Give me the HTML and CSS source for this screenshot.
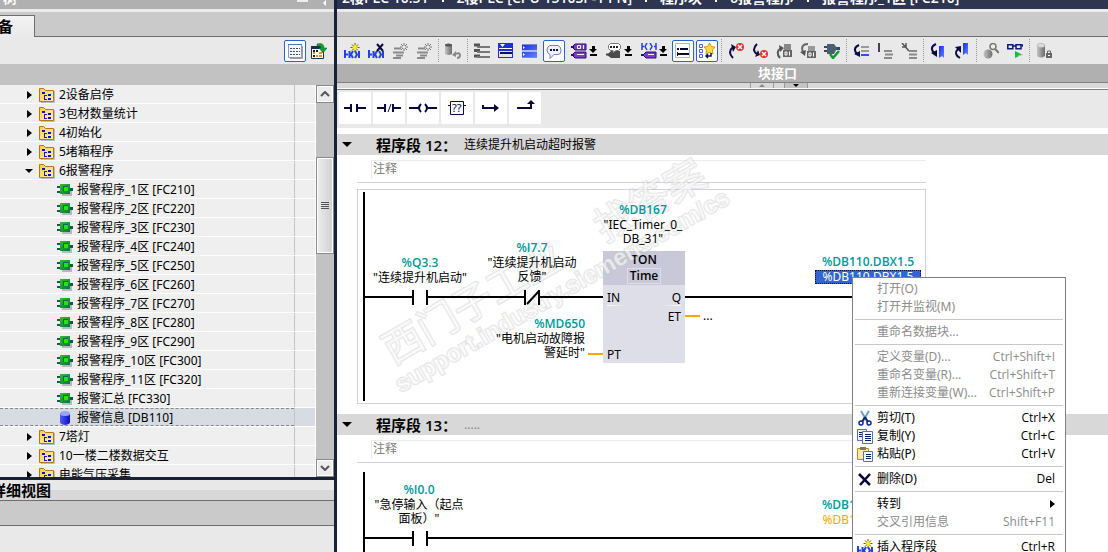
FILE: index.html
```html
<!DOCTYPE html>
<html lang="zh-CN">
<head>
  <meta charset="UTF-8">
  <meta name="viewport" content="width=device-width, initial-scale=1.0">
  <title>报警程序_1区 [FC210]</title>
  <link rel="stylesheet" href="styles.css">
</head>
<body>

  <!-- icon set -->
  <svg class="defs" width="0" height="0">
    <defs>
      <linearGradient id="gold" x1="0" y1="0" x2="1" y2="1"><stop offset="0" stop-color="#ffc94a"/><stop offset="1" stop-color="#fff3c4"/></linearGradient>
      <linearGradient id="green" x1="0" y1="0" x2="1" y2="1"><stop offset="0" stop-color="#2cc42c"/><stop offset="1" stop-color="#0d7040"/></linearGradient>
      <linearGradient id="blue" x1="0" y1="0" x2="1" y2="0"><stop offset="0" stop-color="#4f5cff"/><stop offset="1" stop-color="#0a12b8"/></linearGradient>
      <linearGradient id="panel" x1="0" y1="0" x2="1" y2="1"><stop offset="0" stop-color="#1c2ce8"/><stop offset="1" stop-color="#5a86ff"/></linearGradient>
      <linearGradient id="grey" x1="0" y1="0" x2="1" y2="0"><stop offset="0" stop-color="#c4c4c4"/><stop offset="1" stop-color="#6c6c6c"/></linearGradient>
    </defs>
    <symbol id="i-folder" viewBox="0 0 16 16">
      <path d="M2 15.500h13.500V4" fill="none" stroke="#b9bcc6"/>
      <path d="M.5 14.500V1.500h4l2 2h8v11z" fill="url(#gold)" stroke="#b07a10"/>
      <path d="M3 5h3v2H3zM9 7h3v2H9zM9 11h3v2H9z" fill="#0a0af0"/>
      <path d="M5.500 8v4.500M5 8.500h3M5 12.500h3" stroke="#0a0af0" fill="none"/>
    </symbol>
    <symbol id="i-fc" viewBox="0 0 16 16">
      <path d="M5 13h9M14 9v5" stroke="#b4b8c0" stroke-width="2"/>
      <path d="M0 4h4v2H0zM0 9h4v2H0zM12 6h4v3h-4z" fill="#0c5c4c"/>
      <path d="M3 2h10v10H3z" fill="url(#green)"/>
      <path d="M6 4h5v5H6z" fill="#0b6b3c"/><path d="M7 5h4v4H7z" fill="#24e01e"/>
    </symbol>
    <symbol id="i-db" viewBox="0 0 16 16">
      <path d="M3 3v10q5 4 10 0V3z" fill="url(#blue)"/>
      <ellipse cx="8" cy="3.500" rx="5" ry="2.500" fill="#9aa4ff"/>
    </symbol>
    <symbol id="i-list" viewBox="0 0 16 16">
      <path d="M3 15.500h12.500V3" fill="none" stroke="#9c9ca4"/>
      <path d="M1.500 1.500h13v13h-13z" fill="#f6f8ff" stroke="#8694d8"/>
      <path d="M1 1.500h14" stroke="#5a68b8"/>
      <path d="M3 5.500h10M3 8.500h10M3 11.500h10" stroke="#444a60" stroke-dasharray="2 1"/>
    </symbol>
    <symbol id="i-export" viewBox="0 0 16 16">
      <path d="M.5 4.500h12v11H.5z" fill="#fff" stroke="#1c2b52"/>
      <path d="M0 3h12v3H0z" fill="#1c2b52"/>
      <path d="M2 7h2v2H2zM5 7h2v2H5zM2 12h2v2H2z" fill="#1c1c1c"/>
      <path d="M8 9h3v2H8zM5 12h2v2H5zM8 12h3v2H8zM2 9h2v2H2z" fill="#ef8a1c"/>
      <path d="M6 1q7-2 7 4h3l-4 5-4-5h2q0-3-4-2z" fill="#1c9b2c" stroke="#0b6a1c" stroke-width=".5"/>
    </symbol>
    <symbol id="i-netnew" viewBox="0 0 16 16">
      <path d="M1 7v8M1 11.500h3M5.500 8v7M9 8l-2 3.500 2 3.500M11 8l2 3.500L11 15M15 8v7" fill="none" stroke="#2440e8" stroke-width="2"/>
      <path d="M11 0v9M6.500 4.500h9M8 1.500l6 6M14 1.500l-6 6" stroke="#586008"/>
      <path d="M11 2v5M8.500 4.500h5" stroke="#fff000" stroke-width="2"/>
    </symbol>
    <symbol id="i-netdel" viewBox="0 0 16 16">
      <path d="M1 7v8M1 11.500h3M5.500 8v7M9 8l-2 3.500 2 3.500M11 8l2 3.500L11 15M15 8v7" fill="none" stroke="#2440e8" stroke-width="2"/>
      <path d="M9 1l6 7M15 1L9 8" stroke="#0b0b44" stroke-width="2"/>
    </symbol>
    <symbol id="i-linesnew" viewBox="0 0 16 16">
      <path d="M2 5.500h7M1 9.500h11M4 12.500h7M1 15h8" stroke="#8a8a8a" stroke-width="2"/>
      <path d="M12 0v8M8 4h8M9 1l6 6M15 1L9 7" stroke="#777"/>
      <circle cx="12" cy="4" r="1.500" fill="#eee"/>
    </symbol>
    <symbol id="i-dbundo" viewBox="0 0 16 16">
      <path d="M0 2v9q4 2 7 0V2z" fill="url(#grey)"/><ellipse cx="3.500" cy="2" rx="3.500" ry="1.500" fill="#555"/>
      <path d="M10 11q5-2 5 1 0 3-3 3" fill="none" stroke="#888" stroke-width="2"/><path d="M7 12l4-4v6z" fill="#888"/>
    </symbol>
    <symbol id="i-rows" viewBox="0 0 16 16">
      <path d="M0 2h6M0 7.500h6M0 13h6" stroke="#555" stroke-width="3" fill="none"/>
      <path d="M3 4h13M3 9h13M3 14h13" stroke="#777" stroke-width="2"/>
    </symbol>
    <symbol id="i-window" viewBox="0 0 16 16">
      <path d="M0 0h15v15H0z" fill="#1c2fd8"/><path d="M1 8h13v6H1z" fill="#dfe6ff"/>
      <path d="M2 1h5L4.500 4zM1 5h13v1H1z" fill="#fff"/><path d="M2 10h12" stroke="#0b1050" stroke-width="2"/>
    </symbol>
    <symbol id="i-window2" viewBox="0 0 16 16">
      <path d="M0 2h15v5H0zM0 9h15v5H0z" fill="url(#panel)"/>
      <path d="M0 1.500h15M0 8h15M0 14.500h15" stroke="#7a8ad0"/><path d="M1 3l2 1.500L1 6zM1 10l2 1.500L1 13z" fill="#fff"/>
    </symbol>
    <symbol id="i-bubble" viewBox="0 0 16 16">
      <path d="M4 2.500h8q3 1 3 5 0 4-3 4H8l-4 4v-4q-3-1-3-4.500 0-3.500 3-4.500z" fill="#eef1ff" stroke="#6b7fd4"/>
      <path d="M4 6h2v2H4zM7 6h2v2H7zM10 6h2v2h-2z" fill="#0b1050"/>
    </symbol>
    <symbol id="i-tags" viewBox="0 0 16 16">
      <path d="M1 4l3-3h11v6H4zM1 12l3-3h11v6H4z" fill="#7a3cd0" stroke="#2c0c66"/>
      <path d="M0 4h3M0 12h3" stroke="#2c0c66" stroke-width="2"/>
      <path d="M6.500 2.500h3v3h-3z" fill="none" stroke="#fff"/><path d="M12.500 2v4M6 11.500h7" stroke="#fff"/>
    </symbol>
    <symbol id="i-tagtalk" viewBox="0 0 16 16">
      <path d="M1 12l4-4h9v7H5z" fill="#4a4a4a"/><path d="M0 11.500h4" stroke="#4a4a4a" stroke-width="2"/>
      <path d="M4.500.5h8l2 2v3l-2 2H10l-3 2v-2H4.500l-2-2v-3z" fill="#fff" stroke="#777"/><path d="M4 3h2v2H4zM7 3h2v2H7zM10 3h2v2h-2z" fill="#222"/>
    </symbol>
    <symbol id="i-nettag" viewBox="0 0 16 16">
      <path d="M1 0v7M1 3.500h2M6 0L4 3.500 6 7M9 0l2 3.500L9 7M15 0v7M13 3.500h2" fill="none" stroke="#2440e8" stroke-width="1.500"/>
      <path d="M2 12l3-3h10v6H5z" fill="#7a3cd0" stroke="#2c0c66"/><path d="M0 12h3" stroke="#2c0c66" stroke-width="2"/><path d="M7 11.500h6" stroke="#fff"/>
    </symbol>
    <symbol id="i-form" viewBox="0 0 16 16">
      <path d="M.5.5h14v14H.5z" fill="#fff" stroke="#aab6ee"/>
      <path d="M2 6h2M5 6h8M3 11h11" stroke="#080830" stroke-width="2"/><path d="M2.500 9v4" stroke="#080830"/>
    </symbol>
    <symbol id="i-fav" viewBox="0 0 16 16">
      <path d="M.5 1.500h3v3h-3zM.5 6.500h3v3h-3zM.5 11.500h3v3h-3z" fill="#fff" stroke="#4a60d8"/>
      <path d="M10.500 0l2 3.500 3.500.5-2.500 3 .5 4-3.500-1.500L7 11l.5-4L5 4l3.500-.5z" fill="#ffd83c" stroke="#a87800" stroke-width=".7"/>
      <path d="M12 10v3H7M9 11l-2 2 2 2" fill="none" stroke="#0b1050" stroke-width="1.500"/>
    </symbol>
    <symbol id="i-upx" viewBox="0 0 16 16">
      <path d="M5 15Q-1 9 5 4" fill="none" stroke="#0b0b44" stroke-width="2"/><path d="M3 1l5 3-3 5z" fill="#0b0b44"/>
      <circle cx="12" cy="4" r="4" fill="#e03030"/><path d="M10 2l4 4M14 2l-4 4" stroke="#fff" stroke-width="1.500"/>
    </symbol>
    <symbol id="i-downx" viewBox="0 0 16 16">
      <path d="M5 1Q-1 7 5 11" fill="none" stroke="#0b0b44" stroke-width="2"/><path d="M3 14l5-2-2-5z" fill="#0b0b44"/>
      <circle cx="12" cy="11" r="4" fill="#e03030"/><path d="M10 9l4 4M14 9l-4 4" stroke="#fff" stroke-width="1.500"/>
    </symbol>
    <symbol id="i-upblk" viewBox="0 0 16 16">
      <path d="M4 15Q-1 9 5 5" fill="none" stroke="#555" stroke-width="2"/><path d="M3 2l5 3-4 4z" fill="#555"/>
      <path d="M8 1h7v12H8z" fill="#888"/><path d="M7 7h9v7H7z" fill="#666"/><path d="M9 9h2v3H9zM13.500 8.500v4" fill="none" stroke="#fff"/>
    </symbol>
    <symbol id="i-downblk" viewBox="0 0 16 16">
      <path d="M8 1Q0 1 3 9" fill="none" stroke="#666" stroke-width="2"/><path d="M0 9l5 4 1-6z" fill="#555"/>
      <path d="M8 3h7v10H8z" fill="#999"/><path d="M7 8h9v7H7z" fill="#666"/><path d="M9 10h2v3H9zM13.500 9.500v4" fill="none" stroke="#fff"/>
    </symbol>
    <symbol id="i-check" viewBox="0 0 16 16">
      <path d="M0 3h4v2H0zM0 7h4v2H0zM12 4h4v3h-4z" fill="#34485c"/><path d="M3 1h7l3 4-3 6H3z" fill="#4a5e74"/>
      <path d="M6 11l3 4 6-7" fill="none" stroke="#0f9b2c" stroke-width="2.500"/>
    </symbol>
    <symbol id="i-goto" viewBox="0 0 16 16">
      <path d="M6 2Q-1 5 4 11" fill="none" stroke="#0b0b44" stroke-width="2"/><path d="M1 11l6 3 0-6z" fill="#0b0b44"/>
      <path d="M8 4h8M8 8h8" stroke="#999" stroke-width="2"/><path d="M8 12h8" stroke="#3050f0" stroke-width="2"/>
    </symbol>
    <symbol id="i-ins" viewBox="0 0 16 16">
      <path d="M2 0v9" stroke="#444" stroke-width="2"/><path d="M7 8h8M8 11.500h8M7 15h8" stroke="#8a8a8a" stroke-width="2"/>
    </symbol>
    <symbol id="i-insx" viewBox="0 0 16 16">
      <path d="M1 0l7 8M5 0v5M1 4h3" stroke="#555" stroke-width="1.500"/><path d="M8 8h8M8 11.500h8M8 15h8" stroke="#8a8a8a" stroke-width="2"/>
    </symbol>
    <symbol id="i-markdown" viewBox="0 0 16 16">
      <path d="M6 1Q-1 4 4 10" fill="none" stroke="#0b0b44" stroke-width="2"/><path d="M1 10l6 4 0-7z" fill="#0b0b44"/>
      <path d="M9 3h5v12l-2-2-3 2z" fill="url(#panel)"/>
    </symbol>
    <symbol id="i-markup" viewBox="0 0 16 16">
      <path d="M6 15Q-1 11 4 6" fill="none" stroke="#0b0b44" stroke-width="2"/><path d="M1 4l6-1v7z" fill="#0b0b44"/>
      <path d="M9 0h5v12l-2-2-3 2z" fill="url(#panel)"/>
    </symbol>
    <symbol id="i-search" viewBox="0 0 16 16">
      <circle cx="5" cy="11" r="4.500" fill="url(#grey)"/><circle cx="10" cy="3.500" r="3" fill="#eee" stroke="#777" stroke-width="1.500"/><path d="M12 6l4 4" stroke="#777" stroke-width="2"/>
    </symbol>
    <symbol id="i-monitor" viewBox="0 0 16 16">
      <path d="M.8 1.800h5v4h-5zM9 1.800h5v4H9zM6 3h3M14 2l2 0v2" fill="#dfe8ff" stroke="#0b1c6c" stroke-width="1.500"/>
      <path d="M8 8l7 3.500L8 15z" fill="#10c040"/><path d="M11 13l5-1.500" stroke="#bbb"/>
    </symbol>
    <symbol id="i-lock" viewBox="0 0 16 16">
      <path d="M1 2v11q4 3 8 0V2z" fill="url(#grey)"/><ellipse cx="5" cy="2.500" rx="4" ry="2" fill="#ddd" stroke="#999" stroke-width=".5"/>
      <path d="M10 10h6v5h-6z" fill="#666"/><path d="M11.500 10V8h3v2" fill="none" stroke="#666"/><path d="M12 12h2v1h-2z" fill="#fff"/>
    </symbol>
    <symbol id="i-cut" viewBox="0 0 16 16">
      <path d="M4 1l6 10M12 1L6 11" stroke="#6f9cc4" stroke-width="2"/><path d="M8 7l3 5M8 7l-3 5" stroke="#0b2c6c" stroke-width="2"/>
      <circle cx="4" cy="13" r="2" fill="none" stroke="#0b2c8c" stroke-width="1.500"/><circle cx="12" cy="13" r="2" fill="none" stroke="#0b2c8c" stroke-width="1.500"/>
    </symbol>
    <symbol id="i-copy" viewBox="0 0 16 16">
      <path d="M.5 1.500h9v11h-9z" fill="#eef2ff" stroke="#5a6cc0"/><path d="M2 4.500h4M2 6.500h4M2 8.500h4" stroke="#0b1c6c"/>
      <path d="M5.500 3.500h10v12h-10z" fill="#f6f8ff" stroke="#5a6cc0"/><path d="M8 6.500h6M8 8.500h6M8 10.500h6M8 12.500h6" stroke="#0b1c6c"/>
    </symbol>
    <symbol id="i-paste" viewBox="0 0 16 16">
      <path d="M.5 2.500h11v11H.5z" fill="#ffeaa0" stroke="#b88a20"/><path d="M3 1h6v3H3z" fill="#777"/>
      <path d="M6.500 5.500h9v10h-9z" fill="#f6f8ff" stroke="#5a6cc0"/><path d="M9 8.500h5M9 10.500h5M9 12.500h5" stroke="#0b1c6c"/>
    </symbol>
    <symbol id="i-del" viewBox="0 0 16 16">
      <path d="M2 3l11 11M13 3L3 14" stroke="#08083c" stroke-width="2.500"/>
    </symbol>
  </svg>

  <aside class="project">
    <div class="titlebar titlebar-grey">
      <span class="titlebar-text">树</span>
      <span class="titlebar-tools"><i class="dock"></i><i class="collapse"></i></span>
    </div>
    <div class="tabs"><button class="tab">设备</button></div>
    <div class="tools tools-right">
      <button class="tool active" aria-label="详细信息"><svg class="icon"><use href="#i-list"/></svg></button>
      <button class="tool" aria-label="导出"><svg class="icon"><use href="#i-export"/></svg></button>
    </div>
    <div class="tree-head"></div>

    <div class="tree-area">
      <ul class="tree">
        <li class="row"><span class="name"><i class="arrow"></i><svg class="icon"><use href="#i-folder"/></svg>2设备启停</span></li>
        <li class="row"><span class="name"><i class="arrow"></i><svg class="icon"><use href="#i-folder"/></svg>3包材数量统计</span></li>
        <li class="row"><span class="name"><i class="arrow"></i><svg class="icon"><use href="#i-folder"/></svg>4初始化</span></li>
        <li class="row"><span class="name"><i class="arrow"></i><svg class="icon"><use href="#i-folder"/></svg>5堵箱程序</span></li>
        <li class="row"><span class="name"><i class="arrow open"></i><svg class="icon"><use href="#i-folder"/></svg>6报警程序</span></li>
        <li class="row"><span class="name child"><svg class="icon"><use href="#i-fc"/></svg>报警程序_1区 [FC210]</span></li>
        <li class="row"><span class="name child"><svg class="icon"><use href="#i-fc"/></svg>报警程序_2区 [FC220]</span></li>
        <li class="row"><span class="name child"><svg class="icon"><use href="#i-fc"/></svg>报警程序_3区 [FC230]</span></li>
        <li class="row"><span class="name child"><svg class="icon"><use href="#i-fc"/></svg>报警程序_4区 [FC240]</span></li>
        <li class="row"><span class="name child"><svg class="icon"><use href="#i-fc"/></svg>报警程序_5区 [FC250]</span></li>
        <li class="row"><span class="name child"><svg class="icon"><use href="#i-fc"/></svg>报警程序_6区 [FC260]</span></li>
        <li class="row"><span class="name child"><svg class="icon"><use href="#i-fc"/></svg>报警程序_7区 [FC270]</span></li>
        <li class="row"><span class="name child"><svg class="icon"><use href="#i-fc"/></svg>报警程序_8区 [FC280]</span></li>
        <li class="row"><span class="name child"><svg class="icon"><use href="#i-fc"/></svg>报警程序_9区 [FC290]</span></li>
        <li class="row"><span class="name child"><svg class="icon"><use href="#i-fc"/></svg>报警程序_10区 [FC300]</span></li>
        <li class="row"><span class="name child"><svg class="icon"><use href="#i-fc"/></svg>报警程序_11区 [FC320]</span></li>
        <li class="row"><span class="name child"><svg class="icon"><use href="#i-fc"/></svg>报警汇总 [FC330]</span></li>
        <li class="row selected"><span class="name child"><svg class="icon"><use href="#i-db"/></svg>报警信息 [DB110]</span></li>
        <li class="row"><span class="name"><i class="arrow"></i><svg class="icon"><use href="#i-folder"/></svg>7塔灯</span></li>
        <li class="row"><span class="name"><i class="arrow"></i><svg class="icon"><use href="#i-folder"/></svg>10一楼二楼数据交互</span></li>
        <li class="row"><span class="name"><i class="arrow"></i><svg class="icon"><use href="#i-folder"/></svg>电能气压采集</span></li>
      </ul>
      <div class="scroll">
        <button class="scroll-btn" aria-label="向上"><svg width="10" height="6"><path d="M1 5l4-4 4 4" fill="none" stroke="#555" stroke-width="2"/></svg></button>
        <div class="scroll-track"><div class="scroll-thumb"><i class="grip"></i></div></div>
        <button class="scroll-btn" aria-label="向下"><svg width="10" height="6"><path d="M1 1l4 4 4-4" fill="none" stroke="#555" stroke-width="2"/></svg></button>
      </div>
    </div>

    <section class="detail">
      <h2 class="detail-title">详细视图</h2>
      <div class="detail-tabs"></div>
      <div class="detail-body"></div>
    </section>
  </aside>

  <main class="editor">
    <nav class="titlebar titlebar-dark">
      <span class="crumb">2楼PLC 10.51</span><i class="crumb-sep"></i>
      <span class="crumb">2楼PLC [CPU 1510SP-1 PN]</span><i class="crumb-sep"></i>
      <span class="crumb">程序块</span><i class="crumb-sep"></i>
      <span class="crumb">6报警程序</span><i class="crumb-sep"></i>
      <span class="crumb">报警程序_1区 [FC210]</span>
    </nav>
    <div class="tabs"></div>

    <div class="tools">
      <button class="tool" aria-label="插入程序段"><svg class="icon"><use href="#i-netnew"/></svg></button>
      <button class="tool" aria-label="删除程序段"><svg class="icon"><use href="#i-netdel"/></svg></button>
      <button class="tool" aria-label="插入行"><svg class="icon"><use href="#i-linesnew"/></svg></button>
      <button class="tool" aria-label="添加行"><svg class="icon"><use href="#i-linesnew"/></svg></button>
      <i class="sep"></i>
      <button class="tool" aria-label="重置起始值"><svg class="icon"><use href="#i-dbundo"/></svg></button>
      <i class="sep"></i>
      <button class="tool" aria-label="展开"><svg class="icon"><use href="#i-rows"/></svg></button>
      <button class="tool" aria-label="打开所有程序段"><svg class="icon"><use href="#i-window"/></svg></button>
      <button class="tool" aria-label="关闭所有程序段"><svg class="icon"><use href="#i-window2"/></svg></button>
      <button class="tool active" aria-label="注释"><svg class="icon"><use href="#i-bubble"/></svg></button>
      <button class="tool drop" aria-label="操作数"><svg class="icon"><use href="#i-tags"/></svg><i class="down"></i></button>
      <button class="tool drop" aria-label="变量信息"><svg class="icon"><use href="#i-tagtalk"/></svg><i class="down"></i></button>
      <button class="tool drop" aria-label="显示"><svg class="icon"><use href="#i-nettag"/></svg><i class="down"></i></button>
      <button class="tool active" aria-label="程序段注释"><svg class="icon"><use href="#i-form"/></svg></button>
      <button class="tool active" aria-label="收藏夹"><svg class="icon"><use href="#i-fav"/></svg></button>
      <i class="sep"></i>
      <button class="tool" aria-label="上一个错误"><svg class="icon"><use href="#i-upx"/></svg></button>
      <button class="tool" aria-label="下一个错误"><svg class="icon"><use href="#i-downx"/></svg></button>
      <button class="tool" aria-label="更新块调用"><svg class="icon"><use href="#i-upblk"/></svg></button>
      <button class="tool" aria-label="下一个块调用"><svg class="icon"><use href="#i-downblk"/></svg></button>
      <button class="tool" aria-label="一致性检查"><svg class="icon"><use href="#i-check"/></svg></button>
      <i class="sep"></i>
      <button class="tool" aria-label="转到行"><svg class="icon"><use href="#i-goto"/></svg></button>
      <button class="tool" aria-label="注释行"><svg class="icon"><use href="#i-ins"/></svg></button>
      <button class="tool" aria-label="取消注释"><svg class="icon"><use href="#i-insx"/></svg></button>
      <i class="sep"></i>
      <button class="tool" aria-label="下一个书签"><svg class="icon"><use href="#i-markdown"/></svg></button>
      <button class="tool" aria-label="上一个书签"><svg class="icon"><use href="#i-markup"/></svg></button>
      <i class="sep"></i>
      <button class="tool" aria-label="搜索"><svg class="icon"><use href="#i-search"/></svg></button>
      <button class="tool" aria-label="监视"><svg class="icon"><use href="#i-monitor"/></svg></button>
      <i class="sep"></i>
      <button class="tool" aria-label="保护"><svg class="icon"><use href="#i-lock"/></svg></button>
    </div>

    <div class="interface">块接口</div>
    <div class="splitter">
      <button class="split-btn" aria-label="收起"><i class="tri up"></i></button>
      <button class="split-btn on" aria-label="展开"><i class="tri"></i></button>
    </div>

    <!-- favourite instructions -->
    <div class="favs">
      <button class="fav" aria-label="常开触点"><svg width="28" height="16"><path d="M3 8h7M16 8h9" stroke-width="2"/><path d="M10 4v8M16 4v8" stroke-width="2"/></svg></button>
      <button class="fav" aria-label="常闭触点"><svg width="28" height="16"><path d="M2 8h8M18 8h8" stroke-width="2"/><path d="M10 4v8M18 4v8" stroke-width="2"/><path d="M13 12l3-8"/></svg></button>
      <button class="fav" aria-label="线圈"><svg width="28" height="16"><path d="M0 8h10M18 8h10" stroke-width="2"/><path d="M12 4q-4 4 0 8M16 4q4 4 0 8" stroke-width="2"/></svg></button>
      <button class="fav" aria-label="空功能框"><svg width="28" height="16"><path d="M7.500 1.500h13v13h-13zM5 5.500h3M20 5.500h3"/><text class="fav-text" x="9" y="12">??</text></svg></button>
      <button class="fav" aria-label="打开分支"><svg width="28" height="16"><path d="M6 5v4M6 8h14" stroke-width="2"/><path class="solid" d="M17 4l5 4-5 4z"/></svg></button>
      <button class="fav" aria-label="嵌套闭合"><svg width="28" height="16"><path d="M6 8h14V4" stroke-width="2"/><path class="solid" d="M16 4l4-4 4 4z"/></svg></button>
    </div>

    <div class="page">
      <section class="network">
        <header class="net-head"><i class="fold"></i><h3>程序段 12：</h3><span>连续提升机启动超时报警</span></header>
        <p class="comment">注释</p>
        <div class="ladder framed">
          <div class="timer">
            <div class="timer-head"><strong>TON</strong><span>Time</span></div>
            <div class="pins first"><span>IN</span><span>Q</span></div>
            <div class="pins"><span></span><span>ET</span></div>
            <div class="pins last"><span>PT</span></div>
          </div>
          <svg class="watermark" width="400" height="260">
            <text class="wm-big" transform="translate(36 206) rotate(-30)">西门子工业</text>
            <text class="wm-big" transform="translate(248 84) rotate(-30)">找答案</text>
            <text class="wm-small" transform="translate(44 234) rotate(-30)">support.industry.siemens.com/cs</text>
          </svg>
          <svg class="wires" width="569" height="215">
            <path d="M7 3v209" stroke-width="2"/>
            <path d="M6 108h50M71 108h98M182 108h64M328 108h183" stroke-width="2"/>
            <path d="M56 101v15M70 101v15M168 101v15M182 101v15M170 115l12-13" stroke-width="2"/>
            <path class="warn" d="M328 127h15M231 165h15" stroke-width="2"/>
          </svg>
          <div class="op q33"><b>%Q3.3</b>"连续提升机启动"</div>
          <div class="op i77"><b>%I7.7</b>"连续提升机启动<br>反馈"</div>
          <div class="op db167"><b>%DB167</b>"IEC_Timer_0_<br>DB_31"</div>
          <div class="op md650"><b>%MD650</b>"电机启动故障报<br>警延时"</div>
          <div class="op et">...</div>
          <div class="op coil"><b>%DB110.DBX1.5</b><span class="picked">%DB110.DBX1.5</span></div>
        </div>
      </section>

      <section class="network">
        <header class="net-head"><i class="fold"></i><h3>程序段 13：</h3><span class="muted">.....</span></header>
        <p class="comment">注释</p>
        <div class="ladder">
          <svg class="wires" width="569" height="215">
            <path d="M7 3v209" stroke-width="2"/>
            <path d="M6 69h50M71 69h440" stroke-width="2"/>
            <path d="M56 62v15M70 62v15" stroke-width="2"/>
          </svg>
          <div class="op i00"><b>%I0.0</b>"急停输入（起点<br>面板）"</div>
          <div class="op coil2"><b>%DB110.DBX1.6</b><span class="orange">%DB110.DBX1.6</span></div>
        </div>
      </section>
    </div>
  </main>

  <div class="menu" role="menu">
    <button class="item" disabled><span>打开(O)</span></button>
    <button class="item" disabled><span>打开并监视(M)</span></button>
    <hr>
    <button class="item" disabled><span>重命名数据块...</span></button>
    <hr>
    <button class="item" disabled><span>定义变量(D)...</span><kbd>Ctrl+Shift+I</kbd></button>
    <button class="item" disabled><span>重命名变量(R)...</span><kbd>Ctrl+Shift+T</kbd></button>
    <button class="item" disabled><span>重新连接变量(W)...</span><kbd>Ctrl+Shift+P</kbd></button>
    <hr>
    <button class="item"><svg class="icon"><use href="#i-cut"/></svg><span>剪切(T)</span><kbd>Ctrl+X</kbd></button>
    <button class="item"><svg class="icon"><use href="#i-copy"/></svg><span>复制(Y)</span><kbd>Ctrl+C</kbd></button>
    <button class="item"><svg class="icon"><use href="#i-paste"/></svg><span>粘贴(P)</span><kbd>Ctrl+V</kbd></button>
    <hr>
    <button class="item"><svg class="icon"><use href="#i-del"/></svg><span>删除(D)</span><kbd>Del</kbd></button>
    <hr>
    <button class="item"><span>转到</span><i class="arrow"></i></button>
    <button class="item" disabled><span>交叉引用信息</span><kbd>Shift+F11</kbd></button>
    <hr>
    <button class="item"><svg class="icon"><use href="#i-netnew"/></svg><span>插入程序段</span><kbd>Ctrl+R</kbd></button>
  </div>

</body>
</html>
```
FILE: styles.css
```css
* {
  box-sizing: border-box;
}

body {
  margin: 0;
  height: 100vh;
  display: flex;
  gap: 3px;
  overflow: hidden;
  position: relative;
  background: #1b2135;
  color: #000;
  font-family: "Noto Sans", "Noto Sans CJK SC", sans-serif;
  font-size: 12px;
  line-height: 14px;
}

button {
  font: inherit;
  color: inherit;
  border: 0;
  padding: 0;
  background: none;
}

h2, h3, p, ul {
  margin: 0;
  padding: 0;
}

.defs {
  position: absolute;
}

.icon {
  width: 16px;
  height: 16px;
  flex: none;
}

/* shared bars */
.titlebar {
  flex: none;
  height: 9px;
  display: flex;
  align-items: flex-end;
  overflow: hidden;
  color: #fff;
  font-size: 14px;
  font-weight: bold;
  line-height: 22px;
  white-space: nowrap;
}

.titlebar-grey {
  background: #b0b0b0;
  justify-content: space-between;
  padding: 0 8px 0 3px;
}

.titlebar-tools {
  display: flex;
  align-items: flex-start;
  gap: 12px;
  height: 9px;
}

.dock {
  width: 11px;
  height: 2px;
  background: #eee;
}

.collapse {
  border: 3px solid transparent;
  border-right-color: #fff;
  height: 3px;
}

.titlebar-dark {
  background: #2d3550;
  padding-left: 5px;
  gap: 13px;
  font-family: "Open Sans", "Noto Sans CJK SC", sans-serif;
  font-weight: 600;
}

.crumb-sep {
  width: 2px;
  height: 9px;
  border-top: 2px solid #fff;
}

.tabs {
  flex: none;
  height: 28px;
  display: flex;
  align-items: flex-end;
  background: #cacaca;
  border-top: 3px solid #ebebeb;
  border-bottom: 1px solid #6e6e6e;
}

.tab {
  width: 35px;
  height: 22px;
  margin-bottom: -1px;
  padding-right: 21px;
  display: flex;
  justify-content: flex-end;
  background: linear-gradient(#f4f4f4, #e9e9e9);
  border-top: 1px solid #6e6e6e;
  border-right: 1px solid #6e6e6e;
  font-size: 15px;
  line-height: 20px;
  font-weight: bold;
  white-space: nowrap;
}

.tools {
  flex: none;
  height: 27px;
  padding: 0 3px;
  display: flex;
  align-items: center;
  background: #e9e9e9;
}

.tools-right {
  justify-content: flex-end;
}

.tool {
  flex: none;
  width: 24px;
  height: 24px;
  display: flex;
  align-items: center;
  justify-content: center;
}

.tool.active {
  width: 22px;
  height: 22px;
  margin: 1px;
  background: #fff;
  border: 1px solid #2a62d0;
  border-radius: 2px;
}

.tool.drop {
  width: 35px;
  gap: 3px;
}

.down {
  width: 7px;
  height: 10px;
  background:
    linear-gradient(#000, #000) 50% 0 / 3px 3px no-repeat,
    linear-gradient(#000, #000) 0 100% / 7px 2px no-repeat;
}

.down::before {
  content: "";
  display: block;
  margin-top: 3px;
  border: 4px solid transparent;
  border-top-color: #000;
  border-bottom: 0;
  margin-left: -1px;
  width: 0;
}

.sep {
  flex: none;
  width: 5px;
  height: 23px;
  background: repeating-linear-gradient(#999 0 1px, transparent 1px 2px) 2px 0 / 1px 100% no-repeat;
}

/* project tree */
.project {
  flex: 0 0 334px;
  display: flex;
  flex-direction: column;
  min-height: 0;
}

.tree-head {
  flex: none;
  height: 21px;
  background: #c2c2c2;
}

.tree-area {
  flex: 1;
  min-height: 0;
  display: flex;
  background: #fff;
}

.tree {
  flex: 1;
  list-style: none;
  overflow: hidden;
}

.row {
  height: 19px;
  display: flex;
  margin-right: 1px;
  background: #efefef;
  border-bottom: 1px solid #fff;
}

.row::after {
  content: "";
  width: 20px;
  border-left: 1px solid #c4c4c4;
}

.name {
  flex: 1;
  display: flex;
  align-items: center;
  padding: 2px 0 0 27px;
  white-space: nowrap;
}

.name .icon {
  margin-right: 4px;
}

.name.child {
  padding-left: 57px;
}

.arrow {
  flex: none;
  width: 12px;
  height: 8px;
}

.arrow::before {
  content: "";
  display: block;
  width: 0;
  border: 4px solid transparent;
  border-left: 5px solid #000;
  border-right: 0;
}

.arrow.open {
  margin-left: -2px;
  width: 14px;
  height: 4px;
}

.arrow.open::before {
  border: 4px solid transparent;
  border-top: 4px solid #000;
  border-bottom: 0;
}

.row.selected {
  background: #d6dce2;
}

.selected .name {
  border-top: 1px dashed #888;
  border-bottom: 1px dashed #888;
}

.scroll {
  width: 18px;
  display: flex;
  flex-direction: column;
  background: #c2c2c2;
}

.scroll-btn {
  height: 18px;
  flex: none;
  display: flex;
  align-items: center;
  justify-content: center;
  background: #ececec;
  border: 1px solid #888;
  box-shadow: inset 0 0 0 1px #fff;
}

.scroll-track {
  flex: 1;
  padding-top: 54px;
}

.scroll-thumb {
  height: 32%;
  display: flex;
  align-items: center;
  justify-content: center;
  background: linear-gradient(90deg, #ededed, #cfcfcf);
  border: 1px solid #888;
  box-shadow: inset 0 0 0 1px #fff;
}

.grip {
  width: 8px;
  height: 7px;
  background: repeating-linear-gradient(#555 0 1px, transparent 1px 2px);
}

.detail {
  flex: none;
  border-top: 3px solid #1b2135;
}

.detail-title {
  height: 21px;
  overflow: hidden;
  text-indent: -9px;
  background: linear-gradient(#e8e8e8 50%, #d8d8d8 50%);
  border-bottom: 1px solid #6e6e6e;
  font-size: 15px;
  line-height: 20px;
}

.detail-tabs {
  height: 25px;
  background: #cacaca;
  border-bottom: 1px solid #6e6e6e;
}

.detail-body {
  height: 26px;
  background: #e9e9e9;
}

/* editor */
.editor {
  flex: 1;
  min-width: 0;
  display: flex;
  flex-direction: column;
  background: #e9e9e9;
}

.interface {
  flex: none;
  height: 19px;
  background: #b0b0b0;
  border-bottom: 1px solid #808080;
  color: #fff;
  font-weight: bold;
  font-size: 13px;
  line-height: 18px;
  text-align: center;
  padding-left: 110px;
}

.splitter {
  flex: none;
  height: 7px;
  display: flex;
  justify-content: center;
  gap: 10px;
  padding-left: 112px;
  background: #d9d9d9;
  border-bottom: 1px solid #808080;
  box-shadow: inset 0 -1px #fff;
}

.split-btn {
  width: 24px;
  height: 5px;
  display: flex;
  align-items: center;
  justify-content: center;
  border: 1px solid #999;
  border-width: 0 1px;
}

.split-btn.on {
  background: #c4c4c4;
}

.tri {
  border: 3px solid transparent;
  border-top-color: #000;
  border-bottom: 0;
}

.tri.up {
  border: 3px solid transparent;
  border-bottom-color: #888;
  border-top: 0;
}

.favs {
  flex: none;
  display: flex;
  gap: 2px;
  padding: 2px 2px 4px;
}

.fav {
  width: 32px;
  height: 32px;
  display: flex;
  align-items: center;
  justify-content: center;
  background: #fff;
}

.fav path {
  fill: none;
  stroke: #08083c;
}

.fav path.solid {
  fill: #08083c;
  stroke: none;
}

.fav-text {
  font-size: 11px;
  fill: #08083c;
}

.page {
  flex: 1;
  min-height: 0;
  overflow: hidden;
  padding-top: 6px;
  background: #fff;
}

.network {
  margin-bottom: 10px;
}

.net-head {
  height: 21px;
  display: flex;
  align-items: center;
  padding-left: 5px;
  background: #d8d8d8;
}

.net-head h3 {
  width: 88px;
  font-family: "Open Sans", "Noto Sans CJK SC", sans-serif;
  font-size: 15px;
  font-weight: 600;
  line-height: 20px;
  white-space: nowrap;
}

.fold {
  margin-right: 24px;
  border: 5px solid transparent;
  border-top-color: #000;
  border-bottom: 0;
}

.muted {
  color: #888;
}

.comment {
  width: 569px;
  height: 28px;
  margin-left: 20px;
  padding: 7px 0 0 16px;
  border-bottom: 1px solid #cfcfe6;
  color: #808080;
  background:
    linear-gradient(#ececec, #ececec) 14px 5px / 100% 1px no-repeat,
    linear-gradient(#ececec, #ececec) 14px 5px / 1px 19px no-repeat;
}

/* ladder diagram, nodes sit on a free canvas */
.ladder {
  position: relative;
  width: 569px;
  height: 215px;
  margin: 6px 0 0 20px;
}

.ladder.framed {
  box-shadow: inset 0 0 0 1px #cfcfe6;
}

.wires {
  position: absolute;
  left: 0;
  top: 0;
}

.wires path {
  fill: none;
  stroke: #000;
}

.wires path.warn {
  stroke: #ffa500;
}

.op {
  position: absolute;
  text-align: center;
  white-space: nowrap;
  line-height: 14px;
}

.op b {
  display: block;
  color: #099;
  font-family: "Open Sans", sans-serif;
  font-weight: 600;
  line-height: 16px;
}

.q33 { left: 3px; top: 66px; width: 120px; }
.i77 { left: 115px; top: 51px; width: 120px; }
.db167 { left: 226px; top: 13px; width: 120px; }
.md650 { right: 341px; top: 127px; text-align: right; }
.et { left: 346px; top: 120px; }
.coil { left: 458px; top: 65px; width: 106px; }
.i00 { left: 2px; top: 13px; width: 120px; }
.coil2 { left: 458px; top: 28px; width: 106px; }

.picked {
  display: block;
  background: #3264d2;
  outline: 1px dotted #111;
  outline-offset: -1px;
  color: #fff;
}

.orange {
  color: #ffa500;
}

.timer {
  position: absolute;
  left: 246px;
  top: 62px;
  width: 82px;
  height: 112px;
  background: #dedee8;
}

.timer-head {
  height: 34px;
  display: flex;
  flex-direction: column;
  align-items: center;
  gap: 1px;
  padding-top: 2px;
  background: #c8c8d8;
  font-family: "Open Sans", sans-serif;
}

.timer-head strong,
.timer-head span {
  font-weight: 600;
}

.timer-head span {
  width: 34px;
  text-align: center;
  border: 1px solid #dedee8;
}

.pins {
  display: flex;
  justify-content: space-between;
  height: 19px;
  padding: 6px 4px 0;
}

.pins.first {
  height: 21px;
  margin-bottom: -2px;
  background:
    linear-gradient(90deg, #fff, transparent) 4px 100% / 18px 1px no-repeat,
    linear-gradient(270deg, #fff, transparent) 60px 100% / 18px 1px no-repeat;
}

.pins.last {
  height: 38px;
  padding-top: 25px;
}

.watermark {
  position: absolute;
  left: 0;
  top: -30px;
  overflow: visible;
}

.watermark text {
  fill: rgba(255, 255, 255, 0.6);
  stroke: rgba(190, 190, 190, 0.4);
  stroke-width: 2px;
  paint-order: stroke;
  font-family: "Liberation Sans", "Noto Sans CJK SC", sans-serif;
}

.wm-big {
  font-size: 40px;
}

.wm-small {
  font-size: 24px;
  font-weight: bold;
}

/* context menu */
.menu {
  position: absolute;
  left: 852px;
  top: 277px;
  width: 214px;
  padding: 2px;
  background: #fff;
  border: 1px solid #808080;
}

.item {
  width: 100%;
  height: 18px;
  display: flex;
  align-items: center;
  padding: 0 8px 0 2px;
  text-align: left;
  white-space: nowrap;
}

.item span {
  flex: 1;
  padding-left: 4px;
}

.item span:first-child {
  padding-left: 20px;
}

.item:disabled {
  color: #8c8c8c;
}

.item kbd {
  font-family: "Open Sans", sans-serif;
}

.item .arrow {
  width: 5px;
}

.menu hr {
  height: 1px;
  margin: 3px 0;
  border: 0;
  background: #c8c8c8;
}
```
